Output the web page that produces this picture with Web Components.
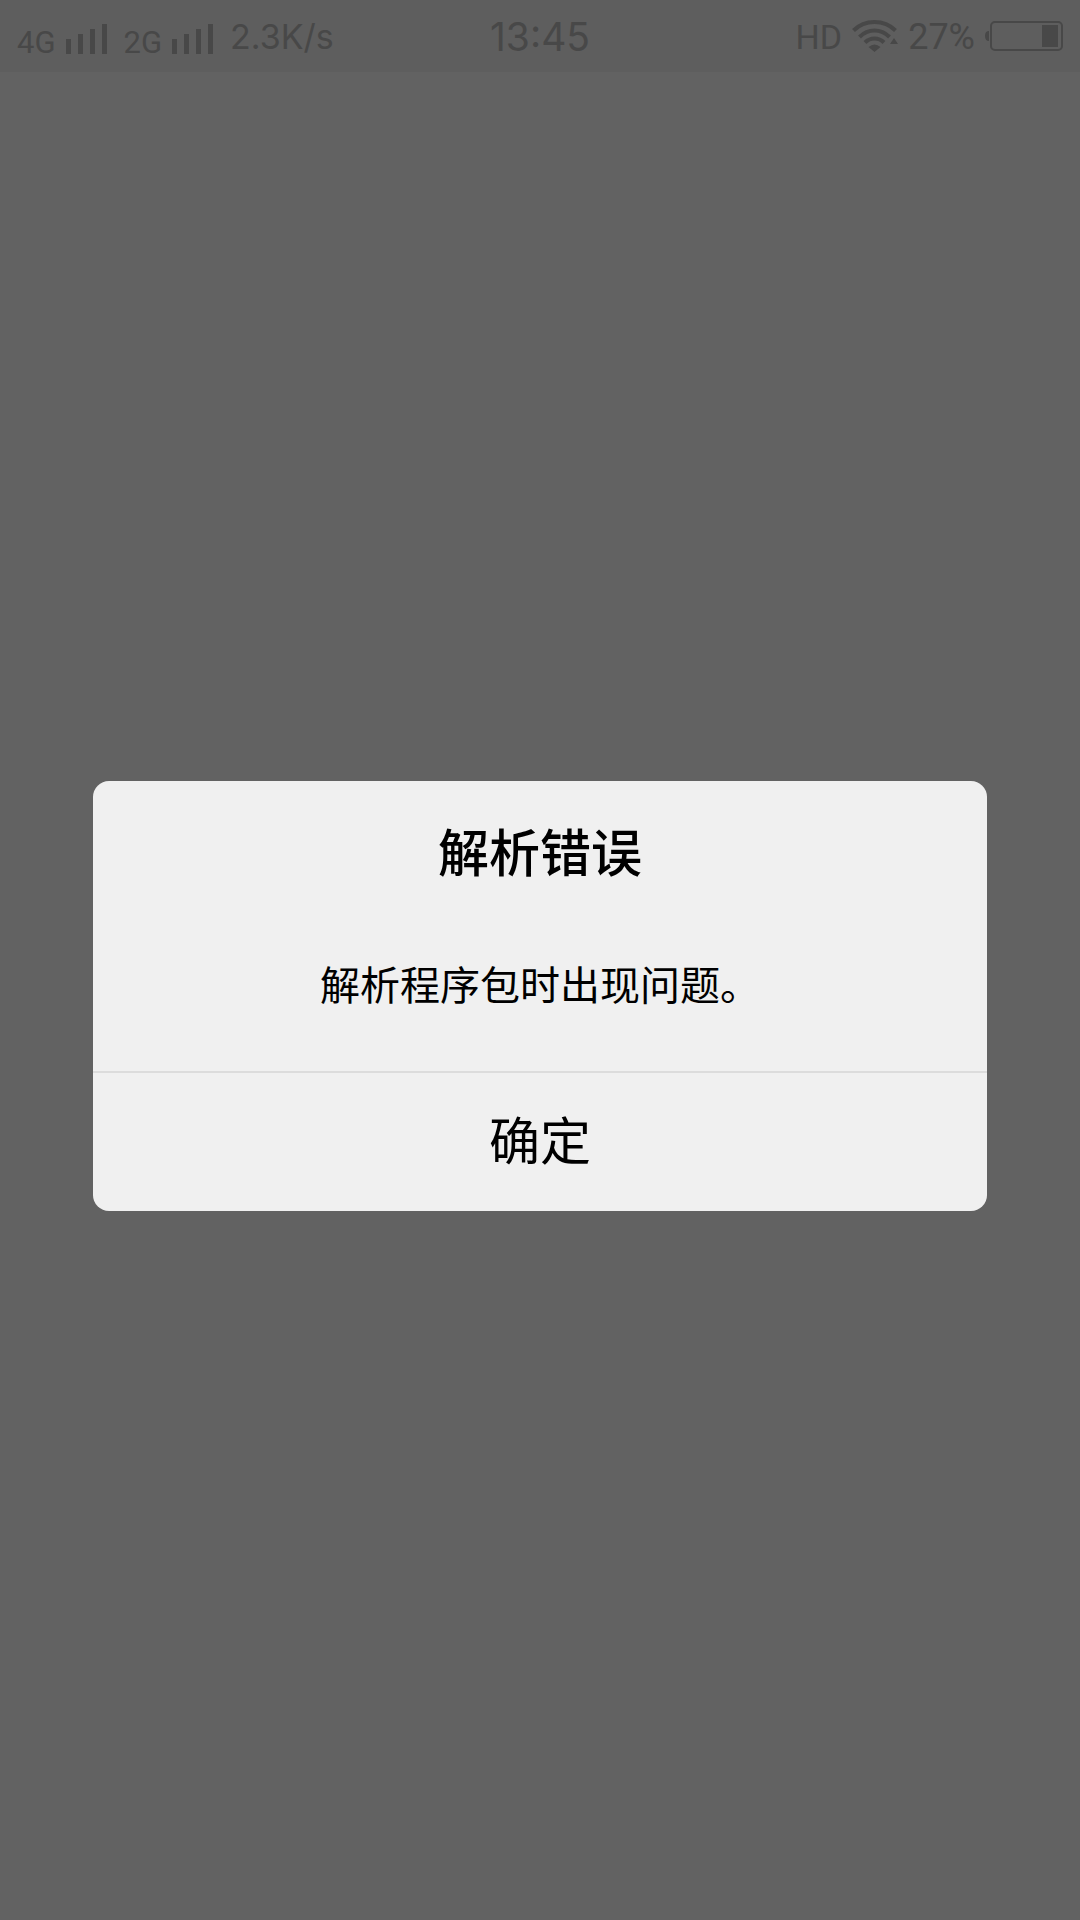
<!DOCTYPE html>
<html lang="zh-CN">
<head>
<meta charset="utf-8">
<meta name="viewport" content="width=device-width, initial-scale=1">
<title>解析错误</title>
<style>
  html, body { height: 100%; margin: 0; }
  body { background: #626262; font-family: Inter, "Noto Sans CJK SC", sans-serif; }
</style>
</head>
<body>
<app-screen>
  <status-bar slot="status">
    <signal-meter slot="start">4G</signal-meter>
    <signal-meter slot="start">2G</signal-meter>
    <span slot="start">2.3K/s</span>
    <time slot="time">13:45</time>
    <hd-mark slot="end">HD</hd-mark>
    <wifi-icon slot="end"></wifi-icon>
    <battery-meter slot="end">27%</battery-meter>
  </status-bar>
  <alert-dialog>
    <span slot="title">解析错误</span>
    <span slot="message">解析程序包时出现问题。</span>
    <span slot="action">确定</span>
  </alert-dialog>
</app-screen>
<script>
const define = (name, html) => {
  const template = document.createElement('template');
  template.innerHTML = html;
  customElements.define(name, class extends HTMLElement {
    constructor() {
      super();
      this.attachShadow({ mode: 'open' }).append(template.content.cloneNode(true));
    }
  });
};

define('app-screen', `
  <style>
    :host { display: flex; flex-direction: column; min-height: 100%; }
    main { flex: 1; display: flex; align-items: center; justify-content: center; padding: 0 93px; }
  </style>
  <slot name="status"></slot>
  <main><slot></slot></main>`);

define('status-bar', `
  <style>
    :host { display: grid; grid-template-columns: 1fr auto 1fr; align-items: center; box-sizing: border-box; height: 72px; padding: 2px 17px 0; background: #5e5e5e; color: #484848; font-size: 34px; line-height: 40px; }
    div { display: flex; align-items: center; }
    .start { gap: 17px; }
    .end { justify-content: flex-end; gap: 10px; }
    .time { font-size: 39px; }
  </style>
  <div class="start"><slot name="start"></slot></div>
  <div class="time"><slot name="time"></slot></div>
  <div class="end"><slot name="end"></slot></div>`);

define('signal-meter', `
  <style>
    :host { display: flex; align-items: flex-end; gap: 10px; font-family: Roboto, sans-serif; font-size: 31px; line-height: 32px; padding-top: 8px; }
    svg { display: block; margin-bottom: 5px; }
  </style>
  <span><slot></slot></span>
  <svg width="41" height="30" viewBox="0 0 41 30" fill="currentColor" aria-hidden="true">
    <path d="M0 15h5v15H0zM12 10h5v20h-5zM24 5h5v25h-5zM36 0h5v30h-5z"/>
  </svg>`);

define('hd-mark', `
  <style>:host { display: block; font-family: Roboto, sans-serif; font-size: 34px; }</style>
  <slot></slot>`);

define('wifi-icon', `
  <style>:host { display: block; } svg { display: block; margin-bottom: 2px; }</style>
  <svg width="46" height="32" viewBox="0 0 46 32" fill="none" stroke="currentColor" stroke-width="4" role="img" aria-label="Wi-Fi">
    <path d="M1.500 10.500Q10 2 22.500 2T43.500 10.500M7.500 17Q14 10.500 22.500 10.500T37.500 17M13 22.500Q17 18.500 22.500 18.500T32 22.500"/>
    <path d="M16.500 27Q22.500 22 28.500 27L22.500 32zM38 24h8l-4-6z" fill="currentColor" stroke="none"/>
  </svg>`);

define('battery-meter', `
  <style>:host { display: flex; align-items: center; gap: 10px; } span { font-family: Roboto, sans-serif; font-size: 36px; } svg { display: block; margin-bottom: 2px; }</style>
  <span><slot></slot></span>
  <svg width="78" height="30" viewBox="0 0 78 30" aria-hidden="true">
    <rect x="6" y="1" width="71" height="28" rx="4" fill="none" stroke="currentColor" stroke-width="2"/>
    <path d="M4 10Q0 10 0 15T4 20zM57 4h16v22H57z" fill="currentColor"/>
  </svg>`);

define('alert-dialog', `
  <style>
    :host { display: block; flex: 1; }
    section { background: #f0f0f0; border-radius: 16px; overflow: hidden; color: #000; text-align: center; }
    h1 { margin: 0; padding: 33px 48px 37px; font-size: 51px; line-height: 72px; font-weight: 500; }
    p { margin: 0; padding: 30px 48px 58px; font-size: 40px; line-height: 60px; }
    button { display: block; width: 100%; border: 0; border-top: 2px solid #dcdcdc; padding: 29px 48px 37px; background: none; color: inherit; font: inherit; font-size: 51px; line-height: 72px; cursor: pointer; }
    h1, p, button { font-family: "Noto Sans CJK SC", sans-serif; }
  </style>
  <section role="alertdialog" aria-labelledby="title" aria-describedby="message">
    <h1 id="title"><slot name="title"></slot></h1>
    <p id="message"><slot name="message"></slot></p>
    <button type="button"><slot name="action"></slot></button>
  </section>`);
</script>
</body>
</html>
